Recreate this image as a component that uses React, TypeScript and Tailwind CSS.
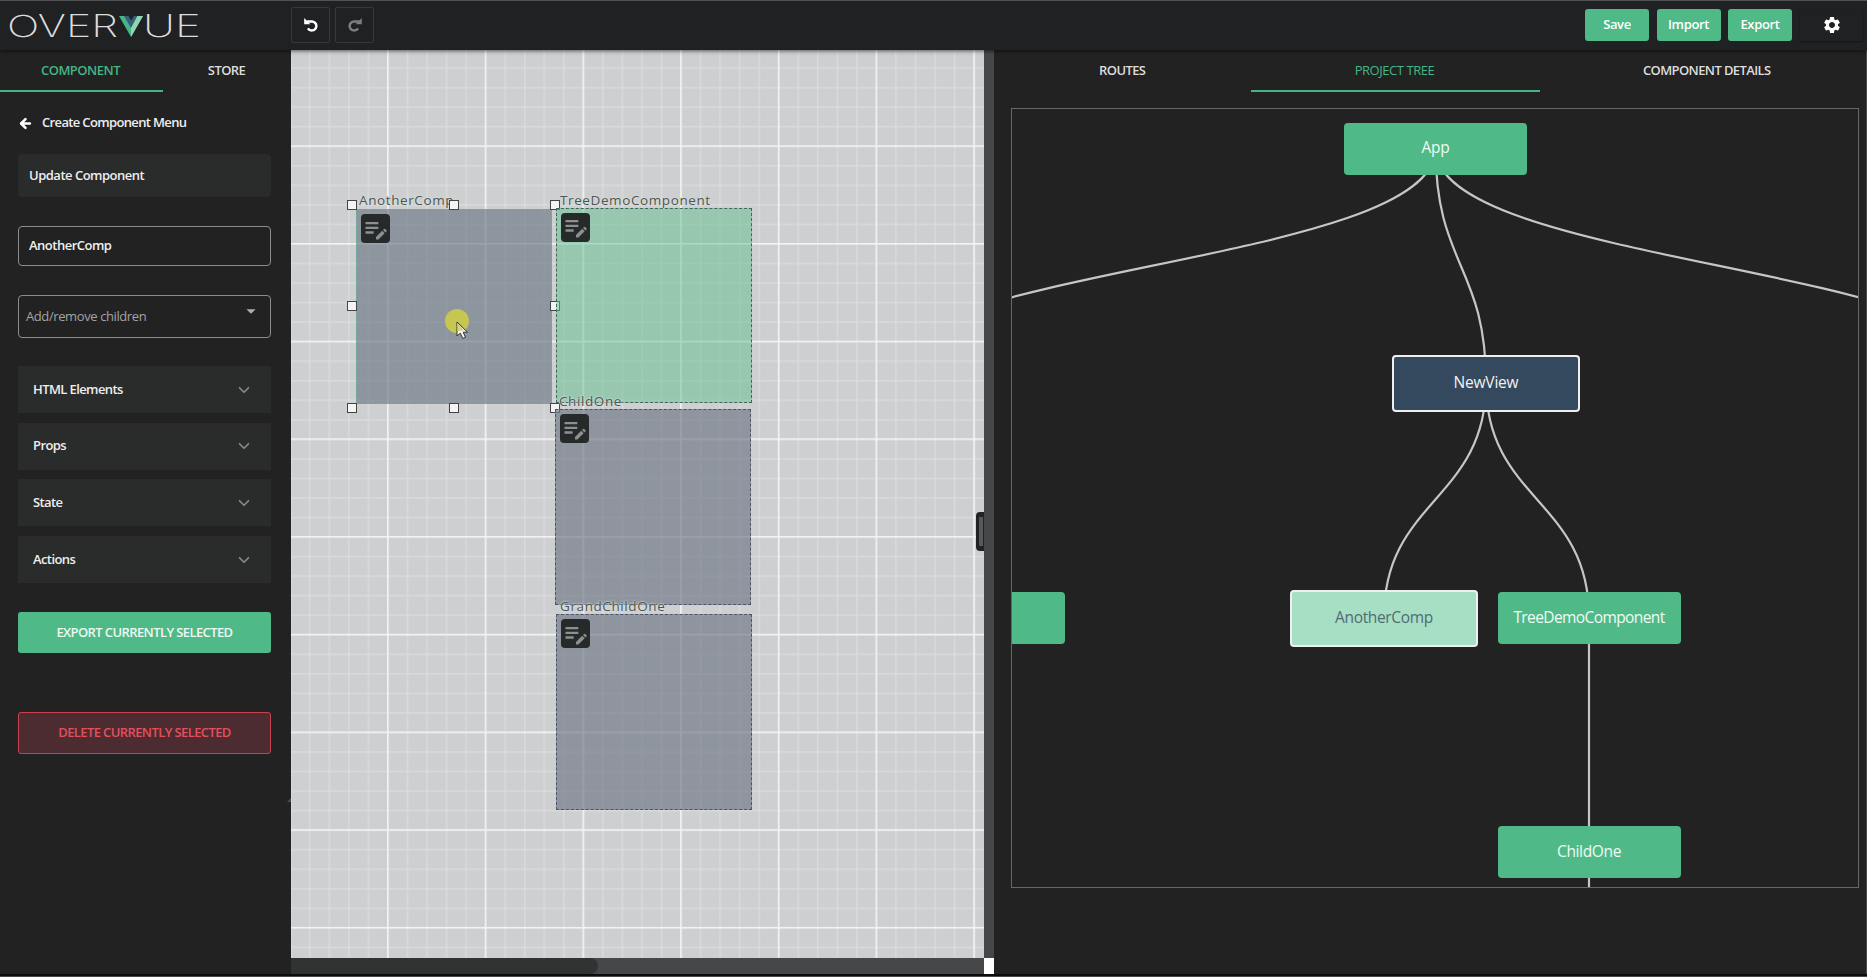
import { MdSettings, MdEditNote, MdArrowDropDown } from "react-icons/md";
import { ArrowLeft, ChevronDown } from "lucide-react";

function RotateIcon({ flip = false }: { flip?: boolean }) {
  return (
    <svg viewBox="0 0 16 16" className={flip ? "h-4 w-4 -scale-x-100" : "h-4 w-4"} fill="none">
      <path d="M3.6 4.4H9.2A4.600 4.600 0 1 1 4.900 11.400" stroke="currentColor" strokeWidth="2.500" />
      <path d="M1.200 1V7.200H7.400Z" fill="currentColor" />
    </svg>
  );
}

function Logo() {
  return (
    <svg className="h-[49px] w-[210px]" viewBox="0 0 210 49">
      <g fill="#dcdcdc" fontSize="30.500" fontWeight="200" className="font-[Inter,sans-serif]">
        <text x="7" y="36" textLength="111" lengthAdjust="spacingAndGlyphs">OVER</text>
        <text x="143" y="36" textLength="58" lengthAdjust="spacingAndGlyphs">UE</text>
      </g>
      <path d="M119 15h6l6 11 5.500-11H143L131 36Z" fill="#45b583" />
      <path d="M124 15h4.500l2.500 4.500 3-4.500h3.500L131 27Z" fill="#35607a" />
      <path d="M137.500 15H143L131 36V27Z" fill="#93d3b2" />
    </svg>
  );
}

function Header() {
  return (
    <header className="z-10 flex h-[50px] shrink-0 items-center border-t border-[#505253] bg-[#202123] pb-px shadow-[0_1px_4px_rgba(0,0,0,0.6)]">
      <div className="w-[291px]"><Logo /></div>
      <div className="flex gap-[5px]">
        <button className="flex h-9 w-[39px] items-center justify-center rounded-xs border border-[#37383a] text-white"><RotateIcon /></button>
        <button className="flex h-9 w-[39px] items-center justify-center rounded-xs border border-[#37383a] text-[#7c7d7f]"><RotateIcon flip /></button>
      </div>
      <div className="ml-auto flex gap-[7.500px] pr-2">
        {["Save", "Import", "Export"].map((label) => (
          <button key={label} className="flex h-8 w-16 items-center justify-center rounded-[3px] bg-[#4fba87] pb-px text-[13px] font-semibold tracking-[-0.35px] text-white">{label}</button>
        ))}
      </div>
      <div className="mr-1 flex h-8 w-[63px] items-center justify-center rounded-[3px] shadow-[0_1px_2px_rgba(0,0,0,0.4)]">
        <MdSettings className="h-5 w-5 text-white" />
      </div>
    </header>
  );
}

function Accordion({ title }: { title: string }) {
  return (
    <div className="flex h-[47px] items-center justify-between bg-[#2a2c2b] pr-[18px] pl-[15px] text-[13px] font-semibold text-[#eee]">
      <span>{title}</span>
      <ChevronDown className="h-[18px] w-[18px] text-[#8a8b8a]" strokeWidth={2.200} />
    </div>
  );
}

function Sidebar() {
  return (
    <aside className="relative flex w-[291px] shrink-0 flex-col bg-[#222223] tracking-[-0.6px]">
      <div className="flex h-[42px] text-[13px] font-semibold">
        <div className="flex w-[163px] items-center justify-center border-b-2 border-[#45b583] pt-[2px] pr-[2px] text-[#45b583]">
          <span className="tracking-[-0.5px]">COMPONENT</span>
        </div>
        <div className="flex flex-1 items-center justify-center border-b-2 border-transparent pt-[2px] pr-px text-[#ddd]">STORE</div>
      </div>
      <div className="flex flex-col pr-[20px] pl-[18px]">
        <div className="mt-[21px] flex h-5 items-center gap-[9px] text-[13px] font-semibold tracking-[-0.65px] text-[#eee]">
          <ArrowLeft className="h-[15px] w-[15px] text-white" strokeWidth={4} />
          Create Component Menu
        </div>
        <div className="mt-[21px] flex h-[43px] items-center rounded-[4px] bg-[#2a2b2b] px-[11px] text-[13px] font-semibold tracking-[-0.5px] text-[#eee]">Update Component</div>
        <div className="mt-[29px] flex h-10 items-center rounded-[4px] border border-[#8b8c8c] px-[10px] text-[13px] font-semibold tracking-[-0.5px] text-[#f0f0f0]">AnotherComp</div>
        <div className="mt-[29px] flex h-[43px] items-center justify-between rounded-[4px] border border-[#8b8c8c] pr-[8px] pl-[7px] text-[13px] tracking-[-0.4px] text-[#a3a4a4]">
          <span>Add/remove children</span>
          <MdArrowDropDown className="mb-[11px] h-[22px] w-[22px] text-[#b0b0b0]" />
        </div>
        <div className="mt-[28px] flex flex-col gap-[9.700px]">
          <Accordion title="HTML Elements" />
          <Accordion title="Props" />
          <Accordion title="State" />
          <Accordion title="Actions" />
        </div>
        <button className="mt-[29px] h-[41px] rounded-[3px] bg-[#4fba87] text-[13px] font-semibold text-[#eef7f2]">EXPORT CURRENTLY SELECTED</button>
        <button className="mt-[58.500px] h-[42px] rounded-[3px] border border-[#c9434f] bg-[#4c2b31] text-[13px] font-semibold text-[#e2505e]">DELETE CURRENTLY SELECTED</button>
      </div>
      <svg className="absolute top-[748px] right-0 h-1 w-1" viewBox="0 0 4 4"><path d="M4 0V4H0Z" fill="#4a4b4c" /></svg>
    </aside>
  );
}

function Block({ label, box, text }: { label: string; box: string; text: string }) {
  return (
    <div className={`absolute border border-dashed ${box}`}>
      <span className={`absolute text-[13.500px] leading-4 font-medium tracking-[0.6px] whitespace-nowrap text-[#4c5552] [text-shadow:0_0_2px_#dde3dd,0_0_2px_#dde3dd] ${text}`}>{label}</span>
      <div className="m-1 flex h-[29px] w-[29px] items-center justify-center rounded-[4px] bg-[#262a2b]">
        <MdEditNote className="h-7 w-7 text-[#8d908e]" />
      </div>
    </div>
  );
}

const handles = [
  [352, 204.700], [453.500, 204.700], [555, 204.700],
  [352, 306.300], [555, 306.300],
  [352, 408], [453.500, 408], [555, 408],
];

function Canvas() {
  return (
    <section className="flex w-[703px] shrink-0 flex-col">
      <div className="flex min-h-0 flex-1">
        <div className="relative flex-1 overflow-hidden bg-[#cecfd0]">
          <svg className="absolute inset-0 h-full w-full">
            <defs>
              <pattern id="minor" width="19.540" height="19.540" patternUnits="userSpaceOnUse" x="-1.500" y="-2.300">
                <path d="M0.750 0V19.540M0 0.750H19.540" stroke="#fff" strokeOpacity="0.28" strokeWidth="1.200" />
              </pattern>
              <pattern id="major" width="97.700" height="97.700" patternUnits="userSpaceOnUse" x="-1.700" y="-2.400">
                <path d="M0.850 0V97.700M0 0.850H97.700" stroke="#fff" strokeOpacity="0.72" strokeWidth="1.500" />
              </pattern>
            </defs>
            <rect width="100%" height="100%" fill="url(#minor)" />
            <rect width="100%" height="100%" fill="url(#major)" />
          </svg>
          <div className="absolute -top-[50px] -left-[291px]">
            <Block label="AnotherComp" box="left-[356px] top-[209px] h-[195px] w-[195.500px] border-[#62b597] bg-[rgba(111,122,135,0.68)]" text="left-[2px] -top-[18px]" />
            {handles.map(([x, y]) => (
              <div key={`${x}-${y}`} className="absolute h-[10px] w-[10px] border border-[#444] bg-[#f4f4f4]" style={{ left: x - 5, top: y - 5 }} />
            ))}
            <Block label="TreeDemoComponent" box="left-[556px] top-[207.500px] h-[195.500px] w-[196px] border-[#44645f] bg-[rgba(96,192,142,0.5)]" text="left-[3px] -top-[17px]" />
            <Block label="ChildOne" box="left-[555px] top-[409px] h-[195.500px] w-[196px] border-[#4d5468] bg-[rgba(113,121,136,0.68)]" text="left-[3px] -top-[17px]" />
            <Block label="GrandChildOne" box="left-[556px] top-[614px] h-[196px] w-[196px] border-[#4d5468] bg-[rgba(113,121,136,0.68)]" text="left-[3px] -top-[17px]" />
            <div className="absolute top-[309px] left-[444.500px] h-6 w-6 rounded-full bg-[#c6c651]" />
            <svg className="absolute top-[321px] left-[456px]" width="13" height="20" viewBox="0 0 13 20">
              <path d="M1 1V15L4.300 12.200L6.800 17.500L9.500 16.300L7.200 11.200H11.500Z" fill="#f6f6f6" stroke="#333" strokeWidth="1" />
              <path d="M1.500 2V10L8 9.500Z" fill="#d6cf86" />
            </svg>
          </div>
          <div className="absolute top-[462px] right-0 flex h-[39px] w-2 justify-end rounded-l-[4px] bg-[#222324] py-[5px] pr-px">
            <div className="w-1 bg-[#58595a]" />
          </div>
        </div>
        <div className="w-[10px] bg-[#464748]" />
      </div>
      <div className="flex h-4">
        <div className="flex-1 bg-[#464748]">
          <div className="h-4 w-[307px] rounded-r-full bg-[#313332]" />
        </div>
        <div className="w-[10px] bg-white" />
      </div>
    </section>
  );
}

function Node({ label, place }: { label: string; place: string }) {
  return (
    <div className={`absolute flex items-center justify-center rounded-[4px] text-[15.500px] font-medium ${place}`}>{label}</div>
  );
}

function Tree() {
  return (
    <div className="relative mt-[16px] mr-[7px] ml-[17px] h-[780px] overflow-hidden border border-[#67686a]">
      <div className="absolute -top-[109px] -left-[1012px] h-[977px] w-[1867px]">
        <svg className="absolute inset-0" width="1867" height="1000" fill="none" stroke="#c6c6c6" strokeWidth="2.200">
          <path d="M1435.600 148.500C1435.600 265.700 869.600 265.700 869.600 383" />
          <path d="M1435.600 148.500C1435.600 265.700 1486 265.700 1486 383" />
          <path d="M1435.600 148.500C1435.600 265.700 2001 265.700 2001 383" />
          <path d="M1486 383C1486 500 1384 500 1384 617" />
          <path d="M1486 383C1486 500 1589 500 1589 617V1000" />
        </svg>
        <Node label="App" place="left-[1344px] top-[122.500px] h-[52px] w-[183px] bg-[#4fba87] pb-px tracking-[-0.3px] text-[#f0faf4]" />
        <Node label="NewView" place="left-[1392px] top-[354.500px] h-[57px] w-[188px] border-2 border-[#efefef] bg-[#35495e] tracking-[-0.2px] text-[#f2f2f2]" />
        <Node label="AnotherComp" place="left-[1290px] top-[589.500px] h-[57px] w-[188px] border-2 border-[#efefef] bg-[#a7dfc4] pb-px tracking-[-0.35px] text-[#4f6c72]" />
        <Node label="TreeDemoComponent" place="left-[1497.500px] top-[591.500px] h-[52px] w-[183px] bg-[#4fba87] tracking-[-0.6px] text-[#f0faf4]" />
        <Node label="ChildOne" place="left-[1497.500px] top-[826px] h-[52px] w-[183px] bg-[#4fba87] tracking-[-0.35px] text-[#f0faf4]" />
        <Node label="" place="left-[882px] top-[591.500px] h-[52px] w-[183px] bg-[#4fba87]" />
      </div>
    </div>
  );
}

function RightPanel() {
  return (
    <section className="flex min-w-0 flex-1 flex-col border-r border-[#4a4b4c] bg-[#222223]">
      <div className="flex h-[42px] text-[13px] font-semibold tracking-[-0.6px] text-[#ddd]">
        <div className="flex w-[256.500px] shrink-0 items-center justify-center border-b-2 border-transparent pt-[2px]">ROUTES</div>
        <div className="flex w-[289px] shrink-0 items-center justify-center border-b-2 border-[#45b583] pt-[2px] pr-px font-medium text-[#45b583]">
          <span className="tracking-[-0.45px]">PROJECT TREE</span>
        </div>
        <div className="flex flex-1 items-center justify-center border-b-2 border-transparent pt-[2px] pl-[8px]">COMPONENT DETAILS</div>
      </div>
      <Tree />
    </section>
  );
}

export default function App() {
  return (
    <div className="flex h-[977px] w-[1867px] flex-col overflow-hidden bg-[#222223] font-['Open_Sans','Noto_Sans',sans-serif] [font-stretch:88%]">
      <Header />
      <main className="flex h-[924px] shrink-0">
        <Sidebar />
        <Canvas />
        <RightPanel />
      </main>
      <div className="h-[3px] border-b border-[#48494a] bg-[#0c0c0c]" />
    </div>
  );
}
